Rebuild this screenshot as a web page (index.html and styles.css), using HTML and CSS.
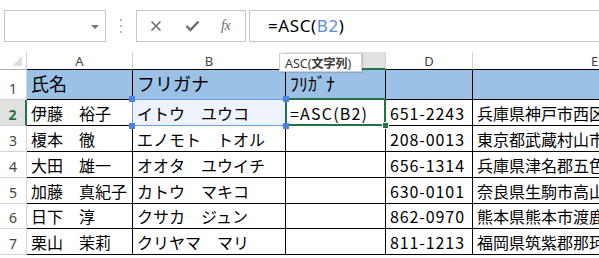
FILE: index.html
```html
<!DOCTYPE html>
<html lang="ja">
<head>
<meta charset="utf-8">
<link rel="stylesheet" href="styles.css">
</head>
<body>
<div class="fbar">
  <div class="namebox"><span class="caret"></span></div>
  <div class="grip">
    <svg width="4" height="14" viewBox="0 0 4 14"><rect x="1" y="0" width="2" height="2" fill="#b5b5b5"/><rect x="1" y="6" width="2" height="2" fill="#b5b5b5"/><rect x="1" y="12" width="2" height="2" fill="#b5b5b5"/></svg>
  </div>
  <div class="fxbox">
    <svg class="ico" width="12" height="12" viewBox="0 0 12 12"><path d="M1.5 1.5 L10.5 10.5 M10.5 1.5 L1.5 10.5" stroke="#6b6b6b" stroke-width="1.6" fill="none"/></svg>
    <svg class="ico" width="15" height="12" viewBox="0 0 15 12"><path d="M1.5 6 L5.5 10 L13.5 1.5" stroke="#6b6b6b" stroke-width="2.4" fill="none"/></svg>
    <span class="fx">fx</span>
  </div>
  <div class="formula">=ASC(<span class="ref">B2</span>)</div>
</div>

<div class="sheet">
  <div class="corner"><span class="tri"></span></div>
  <div class="ch">A</div>
  <div class="ch">B</div>
  <div class="ch sel">
    <div class="tip">ASC(<b>文字列</b>)</div>
  </div>
  <div class="ch">D</div>
  <div class="ch">E</div>

  <div class="rh">1</div>
  <div class="c h1">氏名</div>
  <div class="c h1">フリガナ</div>
  <div class="c h1">ﾌﾘｶﾞﾅ</div>
  <div class="c h1"></div>
  <div class="c h1"></div>

  <div class="rh rsel">2</div>
  <div class="c">伊藤　裕子</div>
  <div class="c refcell">イトウ　ユウコ<span class="hd tl"></span><span class="hd tr"></span><span class="hd bl"></span><span class="hd br"></span></div>
  <div class="c active">=ASC(B2)<span class="gh"></span></div>
  <div class="c num">651-2243</div>
  <div class="c">兵庫県神戸市西区</div>

  <div class="rh">3</div>
  <div class="c">榎本　徹</div>
  <div class="c">エノモト　トオル</div>
  <div class="c"></div>
  <div class="c num">208-0013</div>
  <div class="c">東京都武蔵村山市</div>

  <div class="rh">4</div>
  <div class="c">大田　雄一</div>
  <div class="c">オオタ　ユウイチ</div>
  <div class="c"></div>
  <div class="c num">656-1314</div>
  <div class="c">兵庫県津名郡五色町</div>

  <div class="rh">5</div>
  <div class="c">加藤　真紀子</div>
  <div class="c">カトウ　マキコ</div>
  <div class="c"></div>
  <div class="c num">630-0101</div>
  <div class="c">奈良県生駒市高山町</div>

  <div class="rh">6</div>
  <div class="c">日下　淳</div>
  <div class="c">クサカ　ジュン</div>
  <div class="c"></div>
  <div class="c num">862-0970</div>
  <div class="c">熊本県熊本市渡鹿</div>

  <div class="rh">7</div>
  <div class="c">栗山　茉莉</div>
  <div class="c">クリヤマ　マリ</div>
  <div class="c"></div>
  <div class="c num">811-1213</div>
  <div class="c">福岡県筑紫郡那珂川町</div>
</div>
</body>
</html>
```

FILE: styles.css
```css
html, body {
  margin: 0;
  padding: 0;
  background: #fff;
}
body {
  width: 599px;
  height: 258px;
  overflow: hidden;
}

/* formula bar */
.fbar {
  display: flex;
  align-items: stretch;
  height: 32px;
  padding-top: 10px;
}
.namebox {
  box-sizing: border-box;
  width: 102px;
  margin-left: 4px;
  border: 1px solid #c6c6c6;
  display: flex;
  align-items: center;
  justify-content: flex-end;
  padding-right: 6px;
}
.caret {
  width: 0;
  height: 0;
  border-left: 4px solid transparent;
  border-right: 4px solid transparent;
  border-top: 4px solid #777;
  margin-top: 1px;
}
.grip {
  width: 30px;
  display: flex;
  align-items: center;
  justify-content: center;
}
.fxbox {
  box-sizing: border-box;
  width: 110px;
  border: 1px solid #c6c6c6;
  display: flex;
  align-items: center;
  padding-left: 13px;
}
.fxbox .ico:nth-child(1) { margin-right: 23px; }
.fxbox .ico:nth-child(2) { margin-right: 21px; }
.fx {
  font-family: "Liberation Serif", serif;
  font-style: italic;
  font-size: 14px;
  color: #6b6b6b;
  letter-spacing: -0.5px;
}
.formula {
  flex: 1;
  margin-left: 3px;
  box-sizing: border-box;
  border: 1px solid #c6c6c6;
  border-right: none;
  padding-left: 18px;
  font-family: "Noto Sans", sans-serif;
  font-size: 17px;
  letter-spacing: 0.6px;
  line-height: 29px;
  color: #000;
  white-space: nowrap;
}
.ref { color: #5b8be0; }

/* sheet grid */
.sheet {
  margin-top: 10px;
  display: grid;
  grid-template-columns: 27px 106px 153px 100px 87px 244px;
  grid-template-rows: 18px 30px 26px 26px 26px 26px 25px 26px;
  width: 716px;
}
.corner {
  box-sizing: border-box;
  border-right: 1px solid #d4d4d4;
  border-bottom: 1px solid #ababab;
  position: relative;
}
.tri {
  position: absolute;
  right: 4px;
  bottom: 3px;
  width: 0;
  height: 0;
  border-left: 10px solid transparent;
  border-bottom: 10px solid #dfdfdf;
}
.ch {
  box-sizing: border-box;
  border-right: 1px solid #d4d4d4;
  border-bottom: 1px solid #000;
  display: flex;
  align-items: center;
  justify-content: center;
  font-family: "Noto Sans", sans-serif;
  font-size: 13px;
  color: #444;
  position: relative;
}
.ch.sel {
  background: #e1e1e1;
  border-bottom: 2px solid #217346;
}
.tip {
  position: absolute;
  left: -7px;
  top: 1px;
  width: 83px;
  height: 19px;
  box-sizing: border-box;
  background: #fff;
  border: 1px solid #cfcfcf;
  box-shadow: 1px 1px 1px rgba(0,0,0,0.12);
  font-family: "Noto Sans", "Noto Sans CJK JP", sans-serif;
  font-size: 12.5px;
  line-height: 17px;
  color: #3a3a3a;
  padding-left: 5px;
  white-space: nowrap;
  z-index: 3;
}
.tip b { font-family: "Noto Sans CJK JP", sans-serif; font-weight: 700; font-size: 12px; }
.rh {
  box-sizing: border-box;
  border-right: 1px solid #d4d4d4;
  border-bottom: 1px solid #d4d4d4;
  display: flex;
  align-items: flex-end;
  justify-content: center;
  font-family: "Noto Sans", sans-serif;
  font-size: 14px;
  line-height: 18px;
  padding-bottom: 1px;
  color: #444;
}
.rh.rsel {
  background: #e1e1e1;
  border-right: 2px solid #217346;
  color: #217346;
  font-weight: 700;
}
.c {
  box-sizing: border-box;
  border-right: 1px solid #000;
  border-bottom: 1px solid #000;
  display: flex;
  align-items: center;
  padding-left: 4px;
  font-family: "Noto Sans CJK JP", sans-serif;
  font-size: 16px;
  line-height: 20px;
  color: #000;
  white-space: nowrap;
  overflow: hidden;
  position: relative;
}
.c.h1 {
  background: #9bc2e6;
  font-size: 18px;
  line-height: 18px;
  padding-bottom: 4px;
}
.c.num { letter-spacing: 0.9px; }
.refcell {
  background: #eef2fb;
  overflow: visible;
}
.refcell::before {
  content: "";
  position: absolute;
  left: -1px;
  top: -1px;
  right: -1px;
  bottom: -1px;
  border: 1.5px solid #6f99ea;
  pointer-events: none;
}
.hd {
  position: absolute;
  width: 6px;
  height: 6px;
  background: #4f82e8;
  z-index: 2;
}
.hd.tl { left: -4px; top: -4px; }
.hd.tr { right: -4px; top: -4px; }
.hd.bl { left: -4px; bottom: -4px; }
.hd.br { right: -4px; bottom: -4px; }
.active {
  overflow: visible;
  letter-spacing: 1.2px;
}
.active::before {
  content: "";
  position: absolute;
  left: -1px;
  top: -2px;
  right: -1px;
  bottom: -1px;
  border: 2px solid #217346;
  pointer-events: none;
}
.gh {
  position: absolute;
  right: -4px;
  bottom: -4px;
  width: 5px;
  height: 5px;
  background: #217346;
  border: 1px solid #fff;
  z-index: 2;
}
```
